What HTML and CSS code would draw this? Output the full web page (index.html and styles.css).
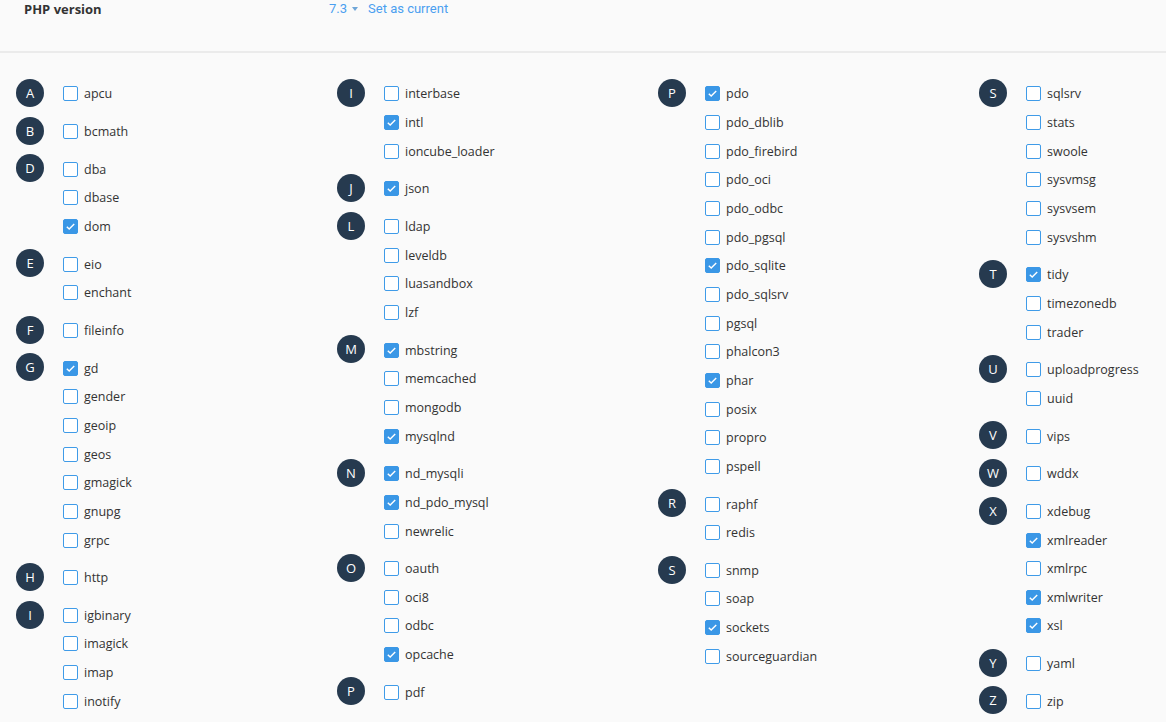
FILE: index.html
```html
<!DOCTYPE html>
<html lang="en">
<head>
    <meta charset="UTF-8">
    <title>PHP extensions</title>
    <link rel="stylesheet" href="styles.css">
</head>
<body>
    <div class="header">
        <div class="header-label">PHP version</div>
        <div class="header-value">
            <span class="version">7.3 <span class="caret"></span></span>
            <a href="#" class="set-current">Set as current</a>
        </div>
    </div>

    <div class="extensions">
        <!-- column 1 -->
        <div class="column">
            <div class="group">
                <div class="badge">A</div>
                <div class="items">
                    <label class="item"><span class="box"></span>apcu</label>
                </div>
            </div>
            <div class="group">
                <div class="badge">B</div>
                <div class="items">
                    <label class="item"><span class="box"></span>bcmath</label>
                </div>
            </div>
            <div class="group">
                <div class="badge">D</div>
                <div class="items">
                    <label class="item"><span class="box"></span>dba</label>
                    <label class="item"><span class="box"></span>dbase</label>
                    <label class="item"><span class="box checked"><svg viewBox="0 0 14 14"><path d="M3 7.2l2.6 2.6L11 4.2"/></svg></span>dom</label>
                </div>
            </div>
            <div class="group">
                <div class="badge">E</div>
                <div class="items">
                    <label class="item"><span class="box"></span>eio</label>
                    <label class="item"><span class="box"></span>enchant</label>
                </div>
            </div>
            <div class="group">
                <div class="badge">F</div>
                <div class="items">
                    <label class="item"><span class="box"></span>fileinfo</label>
                </div>
            </div>
            <div class="group">
                <div class="badge">G</div>
                <div class="items">
                    <label class="item"><span class="box checked"><svg viewBox="0 0 14 14"><path d="M3 7.2l2.6 2.6L11 4.2"/></svg></span>gd</label>
                    <label class="item"><span class="box"></span>gender</label>
                    <label class="item"><span class="box"></span>geoip</label>
                    <label class="item"><span class="box"></span>geos</label>
                    <label class="item"><span class="box"></span>gmagick</label>
                    <label class="item"><span class="box"></span>gnupg</label>
                    <label class="item"><span class="box"></span>grpc</label>
                </div>
            </div>
            <div class="group">
                <div class="badge">H</div>
                <div class="items">
                    <label class="item"><span class="box"></span>http</label>
                </div>
            </div>
            <div class="group">
                <div class="badge">I</div>
                <div class="items">
                    <label class="item"><span class="box"></span>igbinary</label>
                    <label class="item"><span class="box"></span>imagick</label>
                    <label class="item"><span class="box"></span>imap</label>
                    <label class="item"><span class="box"></span>inotify</label>
                </div>
            </div>
        </div>

        <!-- column 2 -->
        <div class="column">
            <div class="group">
                <div class="badge">I</div>
                <div class="items">
                    <label class="item"><span class="box"></span>interbase</label>
                    <label class="item"><span class="box checked"><svg viewBox="0 0 14 14"><path d="M3 7.2l2.6 2.6L11 4.2"/></svg></span>intl</label>
                    <label class="item"><span class="box"></span>ioncube_loader</label>
                </div>
            </div>
            <div class="group">
                <div class="badge">J</div>
                <div class="items">
                    <label class="item"><span class="box checked"><svg viewBox="0 0 14 14"><path d="M3 7.2l2.6 2.6L11 4.2"/></svg></span>json</label>
                </div>
            </div>
            <div class="group">
                <div class="badge">L</div>
                <div class="items">
                    <label class="item"><span class="box"></span>ldap</label>
                    <label class="item"><span class="box"></span>leveldb</label>
                    <label class="item"><span class="box"></span>luasandbox</label>
                    <label class="item"><span class="box"></span>lzf</label>
                </div>
            </div>
            <div class="group">
                <div class="badge">M</div>
                <div class="items">
                    <label class="item"><span class="box checked"><svg viewBox="0 0 14 14"><path d="M3 7.2l2.6 2.6L11 4.2"/></svg></span>mbstring</label>
                    <label class="item"><span class="box"></span>memcached</label>
                    <label class="item"><span class="box"></span>mongodb</label>
                    <label class="item"><span class="box checked"><svg viewBox="0 0 14 14"><path d="M3 7.2l2.6 2.6L11 4.2"/></svg></span>mysqlnd</label>
                </div>
            </div>
            <div class="group">
                <div class="badge">N</div>
                <div class="items">
                    <label class="item"><span class="box checked"><svg viewBox="0 0 14 14"><path d="M3 7.2l2.6 2.6L11 4.2"/></svg></span>nd_mysqli</label>
                    <label class="item"><span class="box checked"><svg viewBox="0 0 14 14"><path d="M3 7.2l2.6 2.6L11 4.2"/></svg></span>nd_pdo_mysql</label>
                    <label class="item"><span class="box"></span>newrelic</label>
                </div>
            </div>
            <div class="group">
                <div class="badge">O</div>
                <div class="items">
                    <label class="item"><span class="box"></span>oauth</label>
                    <label class="item"><span class="box"></span>oci8</label>
                    <label class="item"><span class="box"></span>odbc</label>
                    <label class="item"><span class="box checked"><svg viewBox="0 0 14 14"><path d="M3 7.2l2.6 2.6L11 4.2"/></svg></span>opcache</label>
                </div>
            </div>
            <div class="group">
                <div class="badge">P</div>
                <div class="items">
                    <label class="item"><span class="box"></span>pdf</label>
                </div>
            </div>
        </div>

        <!-- column 3 -->
        <div class="column">
            <div class="group">
                <div class="badge">P</div>
                <div class="items">
                    <label class="item"><span class="box checked"><svg viewBox="0 0 14 14"><path d="M3 7.2l2.6 2.6L11 4.2"/></svg></span>pdo</label>
                    <label class="item"><span class="box"></span>pdo_dblib</label>
                    <label class="item"><span class="box"></span>pdo_firebird</label>
                    <label class="item"><span class="box"></span>pdo_oci</label>
                    <label class="item"><span class="box"></span>pdo_odbc</label>
                    <label class="item"><span class="box"></span>pdo_pgsql</label>
                    <label class="item"><span class="box checked"><svg viewBox="0 0 14 14"><path d="M3 7.2l2.6 2.6L11 4.2"/></svg></span>pdo_sqlite</label>
                    <label class="item"><span class="box"></span>pdo_sqlsrv</label>
                    <label class="item"><span class="box"></span>pgsql</label>
                    <label class="item"><span class="box"></span>phalcon3</label>
                    <label class="item"><span class="box checked"><svg viewBox="0 0 14 14"><path d="M3 7.2l2.6 2.6L11 4.2"/></svg></span>phar</label>
                    <label class="item"><span class="box"></span>posix</label>
                    <label class="item"><span class="box"></span>propro</label>
                    <label class="item"><span class="box"></span>pspell</label>
                </div>
            </div>
            <div class="group">
                <div class="badge">R</div>
                <div class="items">
                    <label class="item"><span class="box"></span>raphf</label>
                    <label class="item"><span class="box"></span>redis</label>
                </div>
            </div>
            <div class="group">
                <div class="badge">S</div>
                <div class="items">
                    <label class="item"><span class="box"></span>snmp</label>
                    <label class="item"><span class="box"></span>soap</label>
                    <label class="item"><span class="box checked"><svg viewBox="0 0 14 14"><path d="M3 7.2l2.6 2.6L11 4.2"/></svg></span>sockets</label>
                    <label class="item"><span class="box"></span>sourceguardian</label>
                </div>
            </div>
        </div>

        <!-- column 4 -->
        <div class="column">
            <div class="group">
                <div class="badge">S</div>
                <div class="items">
                    <label class="item"><span class="box"></span>sqlsrv</label>
                    <label class="item"><span class="box"></span>stats</label>
                    <label class="item"><span class="box"></span>swoole</label>
                    <label class="item"><span class="box"></span>sysvmsg</label>
                    <label class="item"><span class="box"></span>sysvsem</label>
                    <label class="item"><span class="box"></span>sysvshm</label>
                </div>
            </div>
            <div class="group">
                <div class="badge">T</div>
                <div class="items">
                    <label class="item"><span class="box checked"><svg viewBox="0 0 14 14"><path d="M3 7.2l2.6 2.6L11 4.2"/></svg></span>tidy</label>
                    <label class="item"><span class="box"></span>timezonedb</label>
                    <label class="item"><span class="box"></span>trader</label>
                </div>
            </div>
            <div class="group">
                <div class="badge">U</div>
                <div class="items">
                    <label class="item"><span class="box"></span>uploadprogress</label>
                    <label class="item"><span class="box"></span>uuid</label>
                </div>
            </div>
            <div class="group">
                <div class="badge">V</div>
                <div class="items">
                    <label class="item"><span class="box"></span>vips</label>
                </div>
            </div>
            <div class="group">
                <div class="badge">W</div>
                <div class="items">
                    <label class="item"><span class="box"></span>wddx</label>
                </div>
            </div>
            <div class="group">
                <div class="badge">X</div>
                <div class="items">
                    <label class="item"><span class="box"></span>xdebug</label>
                    <label class="item"><span class="box checked"><svg viewBox="0 0 14 14"><path d="M3 7.2l2.6 2.6L11 4.2"/></svg></span>xmlreader</label>
                    <label class="item"><span class="box"></span>xmlrpc</label>
                    <label class="item"><span class="box checked"><svg viewBox="0 0 14 14"><path d="M3 7.2l2.6 2.6L11 4.2"/></svg></span>xmlwriter</label>
                    <label class="item"><span class="box checked"><svg viewBox="0 0 14 14"><path d="M3 7.2l2.6 2.6L11 4.2"/></svg></span>xsl</label>
                </div>
            </div>
            <div class="group">
                <div class="badge">Y</div>
                <div class="items">
                    <label class="item"><span class="box"></span>yaml</label>
                </div>
            </div>
            <div class="group">
                <div class="badge">Z</div>
                <div class="items">
                    <label class="item"><span class="box"></span>zip</label>
                </div>
            </div>
        </div>
    </div>
</body>
</html>
```

FILE: styles.css
```css
body {
    font-family: "Open Sans", "Noto Sans", sans-serif;
    margin: 0;
    padding: 0;
    background-color: #fafafa;
    color: #333;
    font-size: 12.5px;
    overflow: hidden;
}

/* version row */
.header {
    display: flex;
    align-items: flex-start;
    height: 51px;
    padding: 0 24px;
    border-bottom: 2px solid #ebebeb;
    line-height: 18px;
}

.header-label {
    width: 305px;
    font-size: 13px;
    font-weight: 700;
    color: #333;
}

.header-value {
    display: flex;
    align-items: center;
    gap: 10px;
    height: 18px;
    font-family: Roboto, "Liberation Sans", sans-serif;
    font-size: 13px;
    color: #4a9ff0;
}

.version {
    display: flex;
    align-items: center;
    gap: 2px;
}

.caret {
    display: inline-block;
    width: 0;
    height: 0;
    margin-left: 3px;
    border-left: 3.5px solid transparent;
    border-right: 3.5px solid transparent;
    border-top: 4px solid #6fa6d8;
}

.set-current {
    color: #4a9ff0;
    text-decoration: none;
}

/* extension grid */
.extensions {
    display: grid;
    grid-template-columns: 321px 321px 321px 1fr;
    padding: 26px 0 0 16px;
}

.column {
    display: flex;
    flex-direction: column;
    gap: 9px;
}

.group {
    display: flex;
    gap: 19px;
}

.badge {
    flex: none;
    width: 28px;
    height: 28px;
    border-radius: 50%;
    background-color: #263a4f;
    color: #fff;
    display: flex;
    align-items: center;
    justify-content: center;
    font-size: 13px;
}

.items {
    display: flex;
    flex-direction: column;
}

.item {
    display: flex;
    align-items: center;
    gap: 6px;
    height: 28.67px;
    white-space: nowrap;
    padding-top: 1px;
    box-sizing: border-box;
}

.box {
    flex: none;
    width: 15px;
    height: 15px;
    box-sizing: border-box;
    border: 1px solid #3f9be8;
    border-radius: 2px;
    background-color: #fff;
}

.box.checked {
    background-color: #3a97e6;
    border-color: #3a97e6;
}

.box svg {
    display: block;
    width: 13px;
    height: 13px;
    fill: none;
    stroke: #fff;
    stroke-width: 1.5;
}
```
